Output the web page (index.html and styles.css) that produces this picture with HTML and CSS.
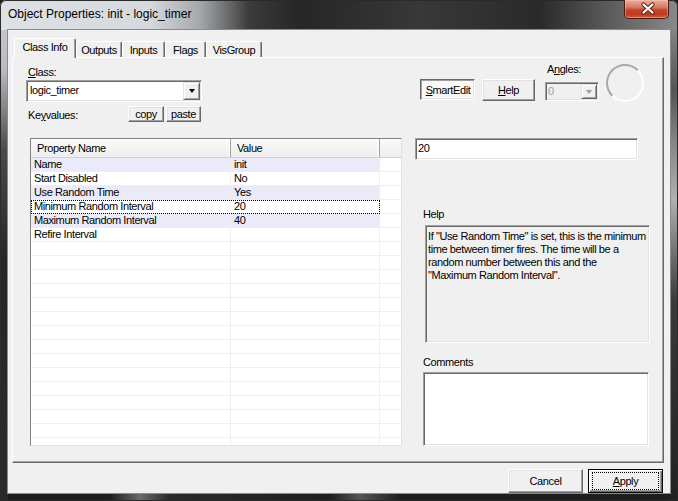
FILE: index.html
```html
<!DOCTYPE html>
<html>
<head>
<meta charset="utf-8">
<title>Object Properties</title>
<link rel="stylesheet" href="styles.css">
</head>
<body>
<div class="window">
  <div class="titlebar">
    <span class="title">Object Properties: init - logic_timer</span>
    <div class="close">
      <svg width="45" height="19" viewBox="0 0 45 19">
        <path d="M19.5 5.5 L28.5 13.5 M28.5 5.5 L19.5 13.5" stroke="#5a2116" stroke-width="4.2" stroke-linecap="round" fill="none"/>
        <path d="M19.5 5.5 L28.5 13.5 M28.5 5.5 L19.5 13.5" stroke="#ffffff" stroke-width="2.2" stroke-linecap="round" fill="none"/>
      </svg>
    </div>
  </div>
  <div class="client">
    <div class="tabstrip">
      <div class="tab active">Class Info</div>
      <div class="tab w-out">Outputs</div>
      <div class="tab w-in">Inputs</div>
      <div class="tab w-fl">Flags</div>
      <div class="tab w-vg">VisGroup</div>
    </div>
    <div class="panel">
      <div class="top">
        <div class="classgroup">
          <div class="lbl"><u>C</u>lass:</div>
          <div class="combo">
            <span class="combo-text">logic_timer</span>
            <div class="arrowbtn"><span class="tri"></span></div>
          </div>
          <div class="kvrow">
            <span class="lbl kvlbl">Ke<u>y</u>values:</span>
            <div class="btn small copy">copy</div>
            <div class="btn small paste">paste</div>
          </div>
        </div>
        <div class="tools">
          <div class="btn pushed smartedit"><u>S</u>martEdit</div>
          <div class="btn helpbtn"><u>H</u>elp</div>
          <div class="angles">
            <div class="lbl">A<u>n</u>gles:</div>
            <div class="combo disabled anglecombo">
              <span class="combo-text">0</span>
              <div class="arrowbtn"><span class="tri"></span></div>
            </div>
          </div>
          <div class="dial"></div>
        </div>
      </div>
      <div class="main">
        <div class="list">
          <div class="lhead">
            <div class="hc c1">Property Name</div>
            <div class="hc c2">Value</div>
            <div class="hc c3"></div>
          </div>
          <div class="rows">
            <div class="row alt"><div class="cells"><span class="c1">Name</span><span class="c2">init</span></div><span class="c3"></span></div>
            <div class="row"><div class="cells"><span class="c1">Start Disabled</span><span class="c2">No</span></div><span class="c3"></span></div>
            <div class="row alt"><div class="cells"><span class="c1">Use Random Time</span><span class="c2">Yes</span></div><span class="c3"></span></div>
            <div class="row focus"><div class="cells"><span class="c1">Minimum Random Interval</span><span class="c2">20</span></div><span class="c3"></span></div>
            <div class="row alt"><div class="cells"><span class="c1">Maximum Random Interval</span><span class="c2">40</span></div><span class="c3"></span></div>
            <div class="row"><div class="cells"><span class="c1">Refire Interval</span><span class="c2"></span></div><span class="c3"></span></div>
            <div class="row"><div class="cells"><span class="c1"></span><span class="c2"></span></div><span class="c3"></span></div>
            <div class="row"><div class="cells"><span class="c1"></span><span class="c2"></span></div><span class="c3"></span></div>
            <div class="row"><div class="cells"><span class="c1"></span><span class="c2"></span></div><span class="c3"></span></div>
            <div class="row"><div class="cells"><span class="c1"></span><span class="c2"></span></div><span class="c3"></span></div>
            <div class="row"><div class="cells"><span class="c1"></span><span class="c2"></span></div><span class="c3"></span></div>
            <div class="row"><div class="cells"><span class="c1"></span><span class="c2"></span></div><span class="c3"></span></div>
            <div class="row"><div class="cells"><span class="c1"></span><span class="c2"></span></div><span class="c3"></span></div>
            <div class="row"><div class="cells"><span class="c1"></span><span class="c2"></span></div><span class="c3"></span></div>
            <div class="row"><div class="cells"><span class="c1"></span><span class="c2"></span></div><span class="c3"></span></div>
            <div class="row"><div class="cells"><span class="c1"></span><span class="c2"></span></div><span class="c3"></span></div>
            <div class="row"><div class="cells"><span class="c1"></span><span class="c2"></span></div><span class="c3"></span></div>
            <div class="row"><div class="cells"><span class="c1"></span><span class="c2"></span></div><span class="c3"></span></div>
            <div class="row"><div class="cells"><span class="c1"></span><span class="c2"></span></div><span class="c3"></span></div>
            <div class="row"><div class="cells"><span class="c1"></span><span class="c2"></span></div><span class="c3"></span></div>
            <div class="row"><div class="cells"><span class="c1"></span><span class="c2"></span></div><span class="c3"></span></div>
          </div>
        </div>
        <div class="side">
          <div class="edit valuebox">20</div>
          <div class="lbl sidelbl helplbl">Help</div>
          <div class="helpbox">If "Use Random Time" is set, this is the minimum<br>time between timer fires. The time will be a<br>random number between this and the<br>"Maximum Random Interval".</div>
          <div class="lbl sidelbl commentslbl">Comments</div>
          <div class="edit commentsbox"></div>
        </div>
      </div>
    </div>
    <div class="footer">
      <div class="btn big">Cancel</div>
      <div class="btn big default"><span class="focusrect"><u>A</u>pply</span></div>
    </div>
  </div>
</div>
</body>
</html>
```

FILE: styles.css
```css
* { box-sizing: border-box; }
html, body { margin: 0; padding: 0; }
body {
  width: 678px;
  height: 501px;
  overflow: hidden;
  background: #1c1c1c;
  font-family: "Liberation Sans", Arial, sans-serif;
  font-size: 11px;
  letter-spacing: -0.4px;
  color: #000;
}
u { text-decoration: underline; text-underline-offset: 1px; }

.window {
  width: 678px;
  height: 501px;
  display: flex;
  flex-direction: column;
  border-radius: 6px 6px 0 0;
  background:
    linear-gradient(to right, #dde1e5 0, #d5d9dd 150px, #a5a8ab 200px, #3a3a3a 250px, #262626 300px, #383838 420px, #2a2a2a 540px, #555 600px, #8a8a8a 678px) 0 0 / 100% 30px no-repeat,
    linear-gradient(to bottom, #cfd3d8 0, #b7bbc0 70px, #4a4a4a 150px, #262626 260px, #2a2a2a 100%) 0 0 / 8px 100% no-repeat,
    linear-gradient(to bottom, #9a9a9a 0, #555 90px, #8c8c8c 150px, #b0b0b0 200px, #3a3a3a 300px, #222 100%) 100% 0 / 8px 100% no-repeat,
    linear-gradient(to right, #1e1e1e 0, #1e1e1e 110px, #6a6a6a 140px, #2a2a2a 170px, #1e1e1e 330px, #555 360px, #1e1e1e 400px, #1e1e1e 100%) 0 100% / 100% 8px no-repeat,
    #1e1e1e;
  box-shadow: inset 0 0 0 1px #2a2a2a;
}

.titlebar {
  height: 30px;
  flex: none;
  display: flex;
  align-items: flex-start;
  padding-left: 8px;
}
.title {
  margin-top: 7px;
  font-size: 12px;
  line-height: 15px;
  letter-spacing: 0;
  color: #000;
  white-space: nowrap;
}
.close {
  margin-left: auto;
  margin-right: 9px;
  width: 45px;
  height: 19px;
  border: 1px solid #4c1a12;
  border-top: none;
  border-radius: 0 0 5px 5px;
  background: linear-gradient(to bottom, #e8b0a2 0, #d87a64 40%, #c4452b 55%, #c03a20 80%, #d0603f 100%);
  box-shadow: inset 0 0 0 1px rgba(255, 200, 180, 0.45);
  overflow: hidden;
}
.close svg { display: block; margin: -1px 0 0 -1px; }

.client {
  margin: 0 8px;
  height: 463px;
  flex: none;
  background: #f0f0f0;
  padding: 0 6px 0 4px;
  display: flex;
  flex-direction: column;
  box-shadow: 0 0 0 1px #8a8a8a;
}

/* tabs */
.tabstrip {
  margin-top: 8px;
  height: 19px;
  display: flex;
  align-items: flex-end;
  padding-left: 2px;
}
.tab {
  height: 16px;
  padding-top: 2px;
  line-height: 13px;
  text-align: center;
  background: #f0f0f0;
  border-top: 1px solid #fff;
  border-left: 1px solid #fff;
  border-right: 1px solid #696969;
  box-shadow: inset -1px 0 0 #a0a0a0;
  border-radius: 2px 2px 0 0;
  white-space: nowrap;
}
.tab.active {
  position: relative;
  z-index: 1;
  height: 20px;
  margin-bottom: -1px;
  width: 62px;
  padding-top: 2px;
}
.w-out { width: 46px; }
.w-in { width: 43px; }
.w-fl { width: 41px; }
.w-vg { width: 56px; }

.panel {
  height: 406px;
  border: 1px solid;
  border-color: #fff #696969 #696969 #fff;
  box-shadow: inset -1px -1px 0 #a0a0a0;
  padding-left: 13px;
  display: flex;
  flex-direction: column;
}

.lbl { line-height: 13px; height: 13px; white-space: nowrap; }

.top { height: 80px; display: flex; flex: none; }
.classgroup { width: 176px; padding-top: 8px; }
.classgroup > .lbl { padding-left: 2px; }

.combo {
  margin-top: 1px;
  height: 22px;
  display: flex;
  align-items: stretch;
  background: #fff;
  border: 1px solid;
  border-color: #a0a0a0 #fff #fff #a0a0a0;
  box-shadow: inset 1px 1px 0 #696969, inset -1px -1px 0 #e3e3e3;
  padding: 1px 1px 1px 2px;
}
.combo-text { flex: 1; line-height: 17px; padding-left: 1px; }
.arrowbtn {
  width: 17px;
  background: #f0f0f0;
  border: 1px solid;
  border-color: #e3e3e3 #696969 #696969 #e3e3e3;
  box-shadow: inset 1px 1px 0 #fff, inset -1px -1px 0 #a0a0a0;
  display: flex;
  align-items: center;
  justify-content: center;
}
.tri {
  width: 0; height: 0;
  border-left: 3.5px solid transparent;
  border-right: 3.5px solid transparent;
  border-top: 4px solid #000;
}

.kvrow { margin-top: 4px; height: 16px; display: flex; }
.kvlbl { width: 102px; padding-left: 2px; margin-top: 3px; }

.btn {
  background: #f0f0f0;
  border: 1px solid;
  border-color: #fff #696969 #696969 #fff;
  box-shadow: inset -1px -1px 0 #a0a0a0, inset 1px 1px 0 #e3e3e3;
  text-align: center;
  white-space: nowrap;
  display: flex;
  align-items: center;
  justify-content: center;
}
.btn.small { height: 16px; line-height: 13px; }
.copy { width: 36px; }
.paste { width: 35px; margin-left: 2px; }

.tools { display: flex; align-items: flex-start; margin-left: 218px; }
.smartedit { margin-top: 21px; width: 55px; height: 21px; }
.btn.pushed {
  border-color: #696969 #fff #fff #696969;
  box-shadow: inset 1px 1px 0 #a0a0a0, inset -1px -1px 0 #e3e3e3;
  background: #f8f8f8;
  padding: 1px 0 0 1px;
}
.helpbtn { margin-top: 21px; margin-left: 7px; width: 53px; height: 22px; }
.angles { margin-left: 10px; margin-top: 5px; width: 54px; }
.angles .lbl { padding-left: 2px; }
.anglecombo { margin-top: 6px; height: 19px; padding: 1px; }
.anglecombo .combo-text { line-height: 15px; padding-left: 1px; }
.combo.disabled { background: #f0f0f0; color: #a0a0a0; }
.combo.disabled .arrowbtn { width: 16px; }
.combo.disabled .tri { border-top-color: #a0a0a0; }
.dial {
  margin-left: 7px;
  margin-top: 6px;
  width: 38px;
  height: 38px;
  border-radius: 50%;
  border: 2px solid;
  border-color: #a8a8a8 #ffffff #ffffff #a8a8a8;
}

/* main */
.main { display: flex; flex: 1; }
.list {
  margin-left: 4px;
  width: 372px;
  height: 308px;
  background: #fff;
  border: 1px solid;
  border-color: #828282 #e3e3e3 #e3e3e3 #828282;
  overflow: hidden;
}
.lhead {
  height: 19px;
  display: flex;
  background: linear-gradient(to bottom, #fafafa, #eeeeee);
  border-bottom: 1px solid #d0d0d0;
}
.hc {
  line-height: 18px;
  padding-left: 6px;
  border-right: 1px solid #a0a0a0;
  box-shadow: inset -1px 0 0 #fff;
  white-space: nowrap;
}
.lhead .c1 { width: 200px; }
.lhead .c2 { width: 149px; padding-left: 6px; }
.lhead .c3 { width: 21px; border-right: none; box-shadow: none; }

.rows { display: flex; flex-direction: column; }
.row { height: 14px; display: flex; flex: none; }
.cells { display: flex; width: 349px; height: 14px; }
.row .c1, .row .c2 {
  height: 14px;
  line-height: 13px;
  padding-left: 3px;
  border-right: 1px solid #efefef;
  border-bottom: 1px solid #efefef;
  white-space: nowrap;
  overflow: hidden;
}
.row .c1 { width: 200px; }
.row .c2 { width: 149px; }
.row .c3 { width: 21px; height: 14px; border-bottom: 1px solid #efefef; }
.row.alt .cells { background: #eaeaf8; }
.row.focus .cells { outline: 1px dotted #000; outline-offset: -1px; }

.side { margin-left: 13px; width: 235px; display: flex; flex-direction: column; }
.edit {
  background: #fff;
  border: 1px solid;
  border-color: #a0a0a0 #fff #fff #a0a0a0;
  box-shadow: inset 1px 1px 0 #696969, inset -1px -1px 0 #e3e3e3;
}
.valuebox { width: 223px; height: 22px; padding: 2px 0 0 2px; line-height: 14px; }
.sidelbl { padding-left: 8px; }
.helplbl { margin-top: 48px; }
.helpbox {
  margin-top: 4px;
  margin-left: 10px;
  width: 225px;
  height: 118px;
  background: #f0f0f0;
  border: 1px solid;
  border-color: #a0a0a0 #fff #fff #a0a0a0;
  box-shadow: inset 1px 1px 0 #696969, inset -1px -1px 0 #e3e3e3;
  padding: 4px 0 0 2px;
  line-height: 13px;
  white-space: nowrap;
  overflow: hidden;
}
.commentslbl { margin-top: 13px; }
.commentsbox { margin-top: 3px; margin-left: 8px; width: 226px; height: 74px; }

.footer {
  margin-top: 6px;
  display: flex;
  justify-content: flex-end;
  gap: 5px;
  padding-right: 1px;
}
.btn.big { width: 75px; height: 24px; font-size: 11px; }
.btn.default {
  border-color: #000;
  box-shadow: inset 1px 1px 0 #fff, inset -1px -1px 0 #696969, inset -2px -2px 0 #a0a0a0;
}
.focusrect {
  width: 65px;
  height: 16px;
  outline: 1px dotted #000;
  display: flex;
  align-items: center;
  justify-content: center;
}
```
